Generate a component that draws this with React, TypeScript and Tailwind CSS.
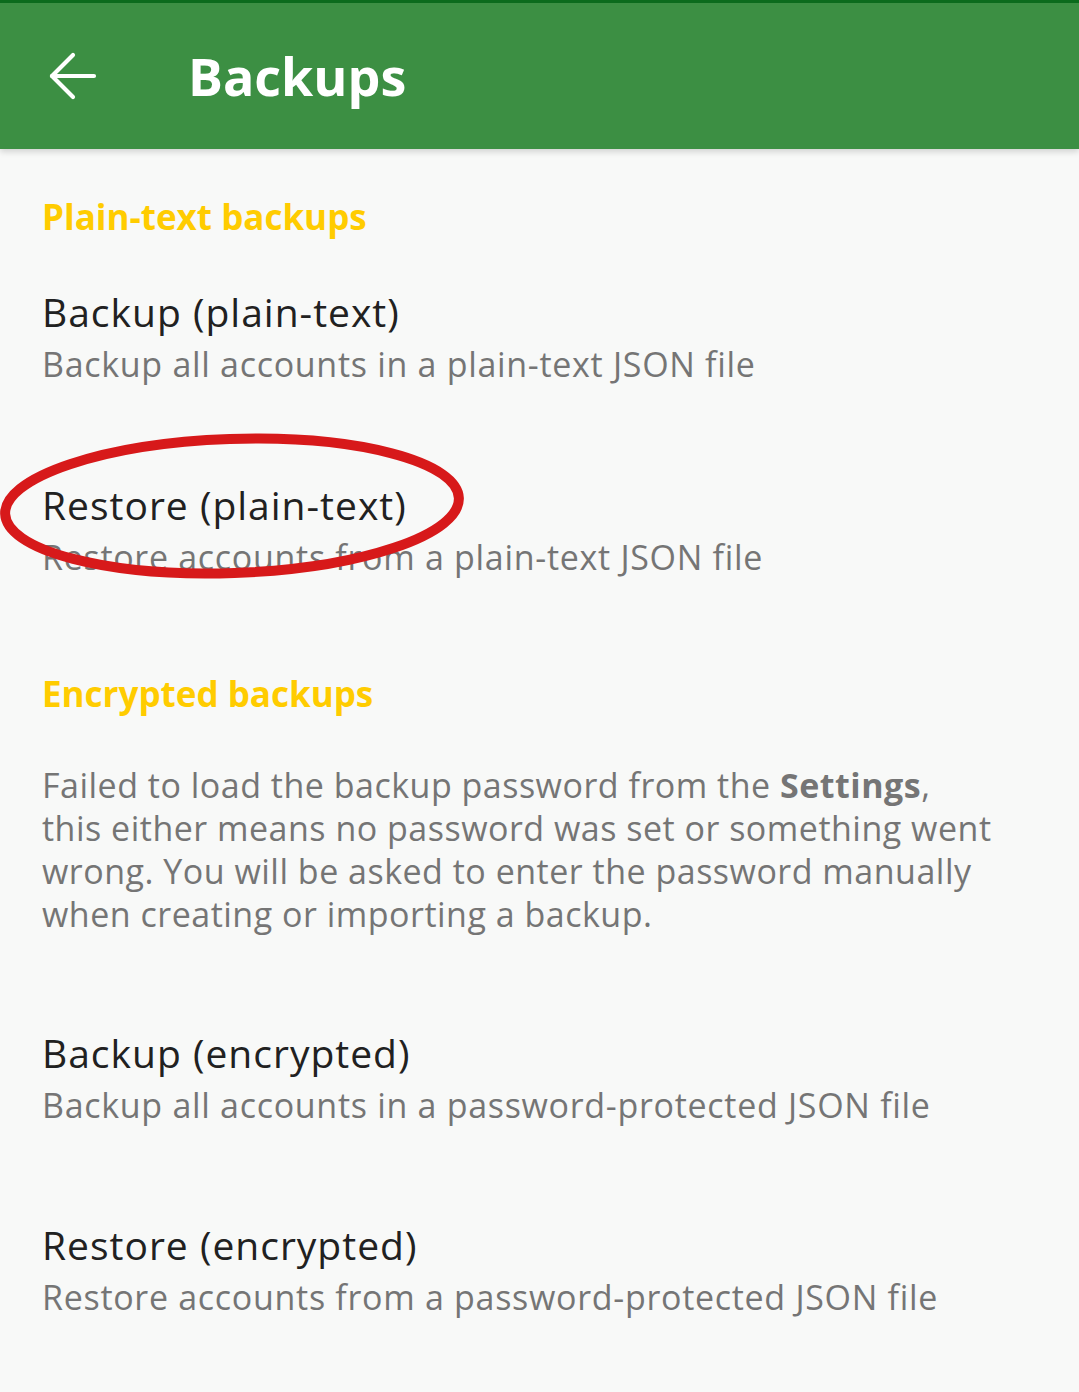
import { ArrowLeft } from "lucide-react";

function Header({ children, className }: { children: string; className: string }) {
  return <div className={`text-[35px] font-bold leading-[44px] text-[#ffcc00] ${className}`}>{children}</div>;
}

function Item({ title, sub, className }: { title: string; sub: string; className: string }) {
  return (
    <div className={className}>
      <div className="text-[39px] leading-[50px] tracking-[1px] text-[#212121]">{title}</div>
      <div className="text-[34px] leading-[54px] tracking-[0.7px] text-[#757575]">{sub}</div>
    </div>
  );
}

export default function App() {
  return (
    <div className="relative min-h-[1392px] w-[1079px] overflow-hidden bg-[#f8f9f8]" style={{ fontFamily: "'Open Sans', Lato, sans-serif" }}>
      <div className="relative z-10 flex h-[149px] items-center border-t-[3px] border-[#0b6b1c] bg-[#3c8f43] shadow-[0_3px_6px_rgba(0,0,0,0.15)]">
        <div className="flex w-[188px] pl-[37px]">
          <ArrowLeft className="h-[72px] w-[72px] text-white" strokeWidth={1.4} />
        </div>
        <h1 className="text-[52px] font-bold text-white">Backups</h1>
      </div>

      <div className="px-[42px]">
        <Header className="mt-[46px]">Plain-text backups</Header>
        <Item className="mt-[48px]" title="Backup (plain-text)" sub="Backup all accounts in a plain-text JSON file" />
        <Item className="mt-[89px]" title="Restore (plain-text)" sub="Restore accounts from a plain-text JSON file" />
        <Header className="mt-[88px]">Encrypted backups</Header>
        <p className="mt-[48px] whitespace-nowrap text-[34px] leading-[43px] tracking-[0.5px] text-[#757575]">
          Failed to load the backup password from the <b className="font-bold">Settings</b>,
          <br />
          this either means no password was set or something went
          <br />
          wrong. You will be asked to enter the password manually
          <br />
          when creating or importing a backup.
        </p>
        <Item className="mt-[92px]" title="Backup (encrypted)" sub="Backup all accounts in a password-protected JSON file" />
        <Item className="mt-[88px]" title="Restore (encrypted)" sub="Restore accounts from a password-protected JSON file" />
      </div>

      <svg className="absolute left-0 top-[430px]" width="470" height="152" viewBox="0 0 470 152">
        <ellipse cx="232" cy="76" rx="227" ry="67" fill="none" stroke="#d7191a" strokeWidth="10" transform="rotate(-2 232 76)" />
      </svg>
    </div>
  );
}
